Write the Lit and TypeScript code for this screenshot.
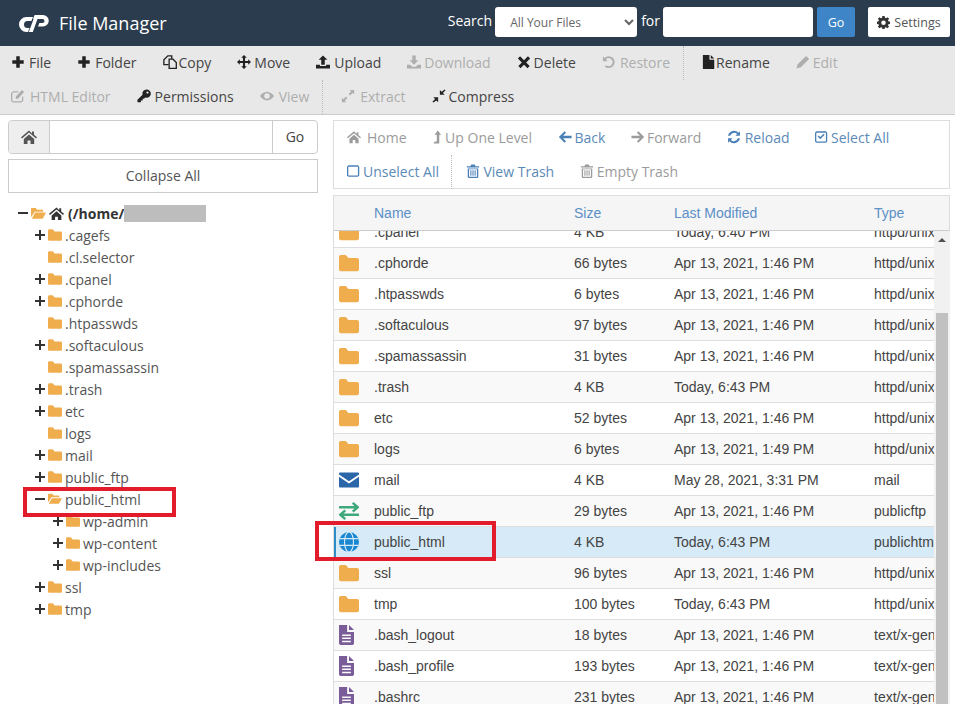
import { LitElement, html, svg, css } from 'lit';
import { customElement } from 'lit/decorators.js';

// icon shapes, all on a 16 unit box
const ICONS: Record<string, any> = {
  plus: svg`<path d="M6 1.500h4v4.500h4.500v4H10v4.500H6V10H1.500V6H6z"/>`,
  copy: svg`<path fill="none" stroke="currentColor" stroke-width="1.500" d="M6 11H1V5.500L5.500 1H10v3.500M11.500 4.800H7v10.400h8.200V8.500z"/>`,
  move: svg`<path d="M8 0l3.200 3.200H9.200V6.800h3.600V4.800L16 8l-3.200 3.200V9.200H9.200v3.600h2L8 16l-3.200-3.200h2V9.200H3.200v2L0 8l3.200-3.200v2h3.600V3.200h-2z"/>`,
  upload: svg`<path d="M8 .5l5 5h-3v5.500H6V5.500H3zM0 11h4.500v1.500h7V11H16v4.500H0z"/>`,
  download: svg`<path d="M6 .5h4v5.500h3l-5 5-5-5h3zM0 11h3.500L6 13.500h4L12.500 11H16v4.500H0z"/>`,
  times: svg`<path d="M3.500 1.500 8 6l4.500-4.500 2.500 2.500L10.500 8.500l4 4-2.500 2.500L8 11l-4 4-2.500-2.500 4-4-4.500-4.500z"/>`,
  undo: svg`<path d="M1 1.500l1.800 1.800A6.800 6.800 0 1 1 3.200 13.300l1.500-1.700A4.500 4.500 0 1 0 4.400 4.900L6.500 7H1z"/>`,
  file: svg`<path d="M1 0h7.500v5.500H14V16H1zM10 0l4 4h-4z"/>`,
  pencil: svg`<path d="M11.500 1 15 4.500 5.500 14 .5 15.500 2 10.500z"/>`,
  edit: svg`<path d="M2.500 2.500H9L7.500 4h-5l-1 1v8l1 1h9l1-1V9.500l1.500-1.500V13.500l-2 2h-10l-2-2v-9zM12.500 1 15 3.500 8 11H5.500V8.500z"/>`,
  key: svg`<path fill-rule="evenodd" d="M11 .5a4.800 4.800 0 0 1 0 9.600c-.6 0-1.100-.1-1.600-.3L8 11.200H6.500v2H4.500v2H.5v-3l5.800-5.600A4.800 4.800 0 0 1 11 .5zM12 2.800a1.300 1.300 0 1 0 0 2.600 1.300 1.300 0 0 0 0-2.600z"/>`,
  eye: svg`<path fill-rule="evenodd" d="M8 3c3.700 0 6.500 2.600 8 5-1.500 2.400-4.300 5-8 5S1.500 10.400 0 8c1.500-2.400 4.300-5 8-5zM8 4.800a3.200 3.200 0 1 0 0 6.400 3.200 3.200 0 0 0 0-6.400z"/>`,
  expand: svg`<path d="M10 1h5v5l-1.700-1.700-3 3-1.600-1.600 3-3zM1 15v-5l1.700 1.700 3-3 1.600 1.600-3 3L6 15z"/>`,
  compress: svg`<path d="M14.500 .5l1 1-3 3L14.500 6.500H9V1l2 2zM1.500 15.500l-1-1 3-3L1.500 9.500H7V15l-2-2z"/>`,
  home: svg`<path d="M8 1.500 0 8.300l1 1.200 7-5.900 7 5.900 1-1.200-3-2.500V2.500h-2v2zM2.800 10 8 5.500l5.200 4.500v5H9.500v-3.500h-3V15H2.800z"/>`,
  up: svg`<path d="M6.500 .5l4 4.800H8.300V15.500H1.500l1.800-2.500h2.200V5.300H3z"/>`,
  left: svg`<path d="M7.500 1.500 9.200 3.200 5.800 6.700H15.500v2.600H5.800l3.400 3.500-1.700 1.700L1 8z"/>`,
  right: svg`<path d="M8.500 1.500 6.800 3.200l3.400 3.500H.5v2.600h9.700l-3.400 3.500 1.700 1.700L15 8z"/>`,
  reload: svg`<path d="M14.800 1.500v5.200H9.600l2-2A4.800 4.800 0 0 0 3.600 6.500H1.200a7.100 7.100 0 0 1 12-3.400zM1.200 14.500V9.300h5.200l-2 2a4.800 4.800 0 0 0 8-1.800h2.400a7.100 7.100 0 0 1-12 3.400z"/>`,
  check: svg`<path fill-rule="evenodd" d="M1.500 1.500h11l1.500 1.500v10l-1.500 1.500h-11L0 13V3zM2 3 1.500 3.500v9l.5.500h10l.5-.5v-9L12 3z"/><path d="M3 7.500 4.200 6.300 6 8.100l3.800-3.800L11 5.500 6 10.500z"/>`,
  square: svg`<path fill-rule="evenodd" d="M1.500 1.500h11l1.500 1.500v10l-1.500 1.500h-11L0 13V3zM2 3 1.500 3.500v9l.5.500h10l.5-.5v-9L12 3z"/>`,
  trash: svg`<path fill-rule="evenodd" d="M6 .5h4l1 2h4v1.500H1V2.500h4zM2 5h12v10l-1 1H3l-1-1zM3.500 6v8.500h9V6zM5 7h1.200v6.500H5zM7.400 7h1.200v6.500H7.400zM9.800 7H11v6.500H9.800z"/>`,
  cog: svg`<path fill-rule="evenodd" d="M6.600 0h2.800l.4 2.200 1.300.6L13 1.500 14.900 3.400 13.500 5.200l.5 1.300 2 .5v2.700l-2 .4-.5 1.300 1.300 1.800-1.900 1.900-1.900-1.300-1.300.5-.4 2.200H6.600l-.4-2.200-1.300-.5L3 15.100 1.100 13.200l1.300-1.800-.5-1.300L0 9.700V7l1.900-.5.500-1.300L1.100 3.400 3 1.500 4.900 2.800l1.300-.6zM8 5.500a2.800 2.800 0 1 0 0 5.600 2.800 2.800 0 0 0 0-5.600z"/>`,
  folder: svg`<path d="M0 3c0-.8.6-1.500 1.500-1.500h4L7.500 4h7c.8 0 1.500.7 1.500 1.500V13c0 .8-.7 1.500-1.500 1.500h-13C.6 14.500 0 13.800 0 13z"/>`,
  open: svg`<path d="M0 3c0-.6.5-1 1-1h4l1.500 2H12c.6 0 1 .4 1 1v1H4L0 12z"/><path d="M4.500 7H16l-3.500 6.500H.8z"/>`,
  mail: svg`<path d="M1 2h14c.6 0 1 .4 1 1v.6L8 9 0 3.600V3c0-.6.4-1 1-1zM0 5.300 8 10.800l8-5.500V13c0 .6-.4 1-1 1H1c-.6 0-1-.4-1-1z"/>`,
  ftp: svg`<path fill="none" stroke="currentColor" stroke-width="2" d="M0 5h15M11 1.500 15 5l-4 3.500M16 11H1M5 7.500 1 11l4 3.500"/>`,
  globe: svg`<circle cx="8" cy="8" r="8"/><g fill="none" stroke="#d6eaf7" stroke-width=".9"><ellipse cx="8" cy="8" rx="3.600" ry="8"/><path d="M.5 5.300h15M.5 10.700h15"/></g>`,
  text: svg`<g transform="translate(-2)"><path fill-rule="evenodd" d="M2 0h6.500v5.500H14V15l-1 1H3l-1-1zM4.500 7.500v1.200h7V7.500zM4.500 10v1.200h7V10zM4.500 12.500v1.200h7v-1.200z"/><path d="M10 0l4 4h-4z"/></g>`,
};

// w is the room an icon takes up in front of its label
const icon = (name: string, w = 16, h = 16) =>
  html`<svg class="ic" width=${w} height=${h} viewBox="0 0 ${(w * 16) / h} 16" preserveAspectRatio="xMinYMid meet" fill="currentColor">${ICONS[name]}</svg>`;

type Action = { i: string; w: number; label: string; off?: boolean; sep?: boolean };

const TOP_ROWS: Action[][] = [
  [
    { i: 'plus', w: 18, label: 'File' },
    { i: 'plus', w: 18, label: 'Folder' },
    { i: 'copy', w: 16, label: 'Copy' },
    { i: 'move', w: 17, label: 'Move' },
    { i: 'upload', w: 18, label: 'Upload' },
    { i: 'download', w: 17, label: 'Download', off: true },
    { i: 'times', w: 17, label: 'Delete' },
    { i: 'undo', w: 18, label: 'Restore', off: true },
    { i: 'file', w: 14, label: 'Rename', sep: true },
    { i: 'pencil', w: 17, label: 'Edit', off: true },
  ],
  [
    { i: 'edit', w: 19, label: 'HTML Editor', off: true },
    { i: 'key', w: 18, label: 'Permissions' },
    { i: 'eye', w: 19, label: 'View', off: true },
    { i: 'expand', w: 19, label: 'Extract', off: true, sep: true },
    { i: 'compress', w: 17, label: 'Compress' },
  ],
];

const NAV_ROWS: Action[][] = [
  [
    { i: 'home', w: 20, label: 'Home', off: true },
    { i: 'up', w: 13, label: 'Up One Level', off: true },
    { i: 'left', w: 17, label: 'Back' },
    { i: 'right', w: 16, label: 'Forward', off: true },
    { i: 'reload', w: 18, label: 'Reload' },
    { i: 'check', w: 16, label: 'Select All' },
  ],
  [
    { i: 'square', w: 16, label: 'Unselect All' },
    { i: 'trash', w: 17, label: 'View Trash', sep: true },
    { i: 'trash', w: 17, label: 'Empty Trash', off: true },
  ],
];

const TREE: [number, string, string][] = [
  [1, '+', '.cagefs'],
  [1, '', '.cl.selector'],
  [1, '+', '.cpanel'],
  [1, '+', '.cphorde'],
  [1, '', '.htpasswds'],
  [1, '+', '.softaculous'],
  [1, '', '.spamassassin'],
  [1, '+', '.trash'],
  [1, '+', 'etc'],
  [1, '', 'logs'],
  [1, '+', 'mail'],
  [1, '+', 'public_ftp'],
  [1, '-', 'public_html'],
  [2, '+', 'wp-admin'],
  [2, '+', 'wp-content'],
  [2, '+', 'wp-includes'],
  [1, '+', 'ssl'],
  [1, '+', 'tmp'],
];

const D = 'Apr 13, 2021, 1:46 PM';
const T = 'Today, 6:43 PM';
const U = 'httpd/unix-directory';
const G = 'text/x-generic';
const FILES: [string, string, string, string, string][] = [
  ['folder', '.cpanel', '4 KB', 'Today, 6:40 PM', U],
  ['folder', '.cphorde', '66 bytes', D, U],
  ['folder', '.htpasswds', '6 bytes', D, U],
  ['folder', '.softaculous', '97 bytes', D, U],
  ['folder', '.spamassassin', '31 bytes', D, U],
  ['folder', '.trash', '4 KB', T, U],
  ['folder', 'etc', '52 bytes', D, U],
  ['folder', 'logs', '6 bytes', 'Apr 13, 2021, 1:49 PM', U],
  ['mail', 'mail', '4 KB', 'May 28, 2021, 3:31 PM', 'mail'],
  ['ftp', 'public_ftp', '29 bytes', D, 'publicftp'],
  ['globe', 'public_html', '4 KB', T, 'publichtml'],
  ['folder', 'ssl', '96 bytes', D, U],
  ['folder', 'tmp', '100 bytes', T, U],
  ['text', '.bash_logout', '18 bytes', D, G],
  ['text', '.bash_profile', '193 bytes', D, G],
  ['text', '.bashrc', '231 bytes', D, G],
];

@customElement('app-root')
export class AppRoot extends LitElement {
  static styles = css`
    :host {
      display: block;
      position: relative;
      height: 100vh;
      overflow: hidden;
      background: #fff;
      font-family: 'Open Sans', sans-serif;
      font-size: 14px;
      color: #333;
    }
    .ic { flex: none; display: block; }

    /* top bar */
    .head {
      height: 46px;
      box-sizing: border-box;
      background: #2b3c4e;
      color: #fff;
      display: flex;
      align-items: center;
      padding: 0 5px 2px 19px;
    }
    .logo { flex: none; margin: 4px 10px 0 0; }
    .title { font-size: 18px; flex: 1; padding-top: 2px; }
    .head-lbl { margin: 0 3px 4px 0; }
    .head select {
      width: 142px;
      height: 30px;
      margin-right: 4px;
      border: 0;
      border-radius: 3px;
      background: #fff;
      color: #666;
      font: 12px 'Open Sans', sans-serif;
      padding-left: 11px;
    }
    .head input {
      width: 150px;
      height: 30px;
      box-sizing: border-box;
      border: 0;
      border-radius: 3px;
      background: #fff;
    }
    .go {
      width: 38px;
      height: 30px;
      margin: 0 13px 0 4px;
      background: #3d85c6;
      color: #fff;
      font-size: 12.500px;
      border-radius: 2px;
      display: flex;
      align-items: center;
      justify-content: center;
    }
    .settings {
      width: 82px;
      height: 30px;
      background: #fff;
      color: #555;
      font-size: 12.500px;
      border-radius: 2px;
      display: flex;
      align-items: center;
      justify-content: center;
      gap: 4px;
    }
    .settings .ic { color: #333; }

    /* main toolbar */
    .tools {
      height: 69px;
      box-sizing: border-box;
      background: #e8e8e8;
      border-bottom: 1px solid #ccc;
      padding-left: 11px;
    }
    .row { display: flex; height: 34px; box-sizing: border-box; padding-bottom: 2px; align-items: center; }
    .act { display: flex; align-items: center; margin-right: 26px; white-space: nowrap; color: #444; }
    .act .ic { color: #222; }
    .act.off, .act.off .ic { color: #aeaeae; }
    .sep { align-self: stretch; width: 0; margin: 0 18px -2px -13px; border-left: 1px dotted #bbb; }

    /* body */
    .body { display: flex; }
    .left { width: 310px; margin: 5px 15px 0 8px; flex: none; }
    .pathbar {
      display: flex;
      height: 34px;
      box-sizing: border-box;
      border: 1px solid #ccc;
      border-radius: 4px;
    }
    .pathbar .home {
      width: 40px;
      background: #eee;
      border-right: 1px solid #ccc;
      border-radius: 4px 0 0 4px;
      color: #555;
      display: flex;
      align-items: center;
      justify-content: center;
    }
    .pathbar .fill { flex: 1; }
    .pathbar .btn {
      width: 44px;
      border-left: 1px solid #ccc;
      color: #444;
      padding-bottom: 2px;
      display: flex;
      align-items: center;
      justify-content: center;
    }
    .collapse {
      height: 34px;
      margin-top: 5px;
      box-sizing: border-box;
      border: 1px solid #ccc;
      padding-bottom: 2px;
      display: flex;
      align-items: center;
      justify-content: center;
      color: #555;
    }

    /* tree */
    .tree { margin-top: 9px; color: #555; }
    .node { height: 22px; display: flex; align-items: center; white-space: nowrap; }
    .node.root { padding-left: 10px; color: #333; font-weight: 700; }
    .node.d1 { padding-left: 27px; }
    .node.d2 { padding-left: 45px; }
    .tog { width: 13px; height: 10px; flex: none; color: #333; }
    .fold { color: #f0ad4e; margin-right: 3px; }
    .node.root .fold { margin-right: 3px; }
    .node .hm { color: #333; margin-right: 4px; }
    .redact { width: 82px; height: 17px; background: #bdbdbd; }

    /* file panel */
    .right { width: 617px; flex: none; margin-top: 5px; }
    .nav {
      height: 69px;
      box-sizing: border-box;
      border: 1px solid #ddd;
      padding-left: 13px;
    }
    .nav .act { color: #5b8ab8; margin-right: 25.500px; }
    .nav .act .ic { color: #4a80b8; }
    .nav .act.off, .nav .act.off .ic { color: #9b9b9b; }
    .nav .sep { margin: 0 14px -2px -13px; }
    .grid { margin-top: 6px; border-left: 1px solid #ddd; height: 509px; display: flex; flex-direction: column; }
    .cols {
      display: grid;
      grid-template-columns: 40px 200px 100px 200px 1fr;
      align-items: center;
      font-family: 'Liberation Sans', Arial, sans-serif;
    }
    .thead {
      height: 36px;
      flex: none;
      box-sizing: border-box;
      background: #f5f5f5;
      border: 1px solid #ddd;
      border-left: 0;
      border-bottom-color: #ccc;
      color: #5b8fc7;
    }
    .scroll { flex: 1; display: flex; min-height: 0; }
    .list { flex: 1; min-width: 0; overflow: hidden; }
    .list-in { margin-top: -14px; }
    .file {
      height: 31px;
      box-sizing: border-box;
      border-bottom: 1px solid #ddd;
      color: #444;
    }
    .file:nth-child(even) { background: #f9f9f9; }
    .file.sel { background: #d6eaf7; box-shadow: inset 2px 0 0 #2f8cc4; }
    .file > div { overflow: hidden; white-space: nowrap; }
    .file .cell-ic { padding-left: 5px; display: flex; }
    .cell-ic.folder { color: #f0ad4e; }
    .cell-ic.mail { color: #2a66a8; }
    .cell-ic.ftp { color: #3fa97b; }
    .cell-ic.globe { color: #1a87d0; }
    .cell-ic.text { color: #7a5c99; }
    .bar { width: 16px; flex: none; background: #f1f1f1; display: flex; flex-direction: column; align-items: center; }
    .bar .arrow {
      margin-top: 7px;
      border: 4px solid transparent;
      border-top: 0;
      border-bottom: 4px solid #505050;
    }
    .bar .thumb { margin-top: 71px; flex: 1; width: 12px; background: #c1c1c1; }

    /* red call-outs drawn over the screenshot */
    .mark { position: absolute; box-sizing: border-box; border: 4px solid #e31c2b; }
    .mark.a { left: 23px; top: 487px; width: 153px; height: 30px; }
    .mark.b { left: 315px; top: 521px; width: 181px; height: 40px; }
  `;

  actions(rows: Action[][]) {
    return rows.map(
      (r) => html`<div class="row">
        ${r.map(
          (a) => html`${a.sep ? html`<span class="sep"></span>` : ''}
            <span class="act ${a.off ? 'off' : ''}">${icon(a.i, a.w, 14)}${a.label}</span>`
        )}
      </div>`
    );
  }

  toggle(t: string) {
    return html`<svg class="tog" viewBox="0 0 13 10" stroke="currentColor" stroke-width="2">
      ${t ? svg`<path d="M0 5h10"/>` : ''}${t === '+' ? svg`<path d="M5 0v10"/>` : ''}
    </svg>`;
  }

  render() {
    return html`
      <div class="head">
        <svg class="logo" width="30" height="20" viewBox="0 0 30 20" fill="#fff">
          <path d="M14 3 12.400 7H8.500A3.500 3.500 0 0 0 8.500 14H10.500L9 18H7.500A7.500 7.500 0 0 1 7.500 3Z" />
          <path d="M14 5 15.600 1H24A5.750 5.750 0 0 1 24 12.500H19L20.400 9H23.500A2 2 0 0 0 23.500 5H18.500L13.800 18H9.800L14.600 5Z" />
        </svg>
        <span class="title">File Manager</span>
        <span class="head-lbl">Search</span>
        <select><option>All Your Files</option></select>
        <span class="head-lbl">for</span>
        <input type="text" />
        <span class="go">Go</span>
        <span class="settings">${icon('cog', 13, 13)}Settings</span>
      </div>
      <div class="tools">${this.actions(TOP_ROWS)}</div>
      <div class="body">
        <div class="left">
          <div class="pathbar">
            <span class="home">${icon('home', 16, 16)}</span>
            <span class="fill"></span>
            <span class="btn">Go</span>
          </div>
          <div class="collapse">Collapse All</div>
          <div class="tree">
            <div class="node root">
              ${this.toggle('-')}<span class="fold">${icon('open', 15, 15)}</span>
              <span class="hm">${icon('home', 15, 15)}</span>(/home/<span class="redact"></span>
            </div>
            ${TREE.map(
              ([d, t, name]) => html`<div class="node d${d}">
                ${this.toggle(t)}
                <span class="fold">${icon(t === '-' ? 'open' : 'folder', 14, 14)}</span>${name}
              </div>`
            )}
          </div>
        </div>
        <div class="right">
          <div class="nav">${this.actions(NAV_ROWS)}</div>
          <div class="grid">
            <div class="cols thead">
              <span></span><span>Name</span><span>Size</span><span>Last Modified</span><span>Type</span>
            </div>
            <div class="scroll">
              <div class="list">
                <div class="list-in">
                  ${FILES.map(
                    (f) => html`<div class="cols file ${f[1] === 'public_html' ? 'sel' : ''}">
                      <div class="cell-ic ${f[0]}">${icon(f[0], 20, 20)}</div>
                      <div>${f[1]}</div>
                      <div>${f[2]}</div>
                      <div>${f[3]}</div>
                      <div>${f[4]}</div>
                    </div>`
                  )}
                </div>
              </div>
              <div class="bar"><span class="arrow"></span><span class="thumb"></span></div>
            </div>
          </div>
        </div>
      </div>
      <div class="mark a"></div>
      <div class="mark b"></div>
    `;
  }
}
